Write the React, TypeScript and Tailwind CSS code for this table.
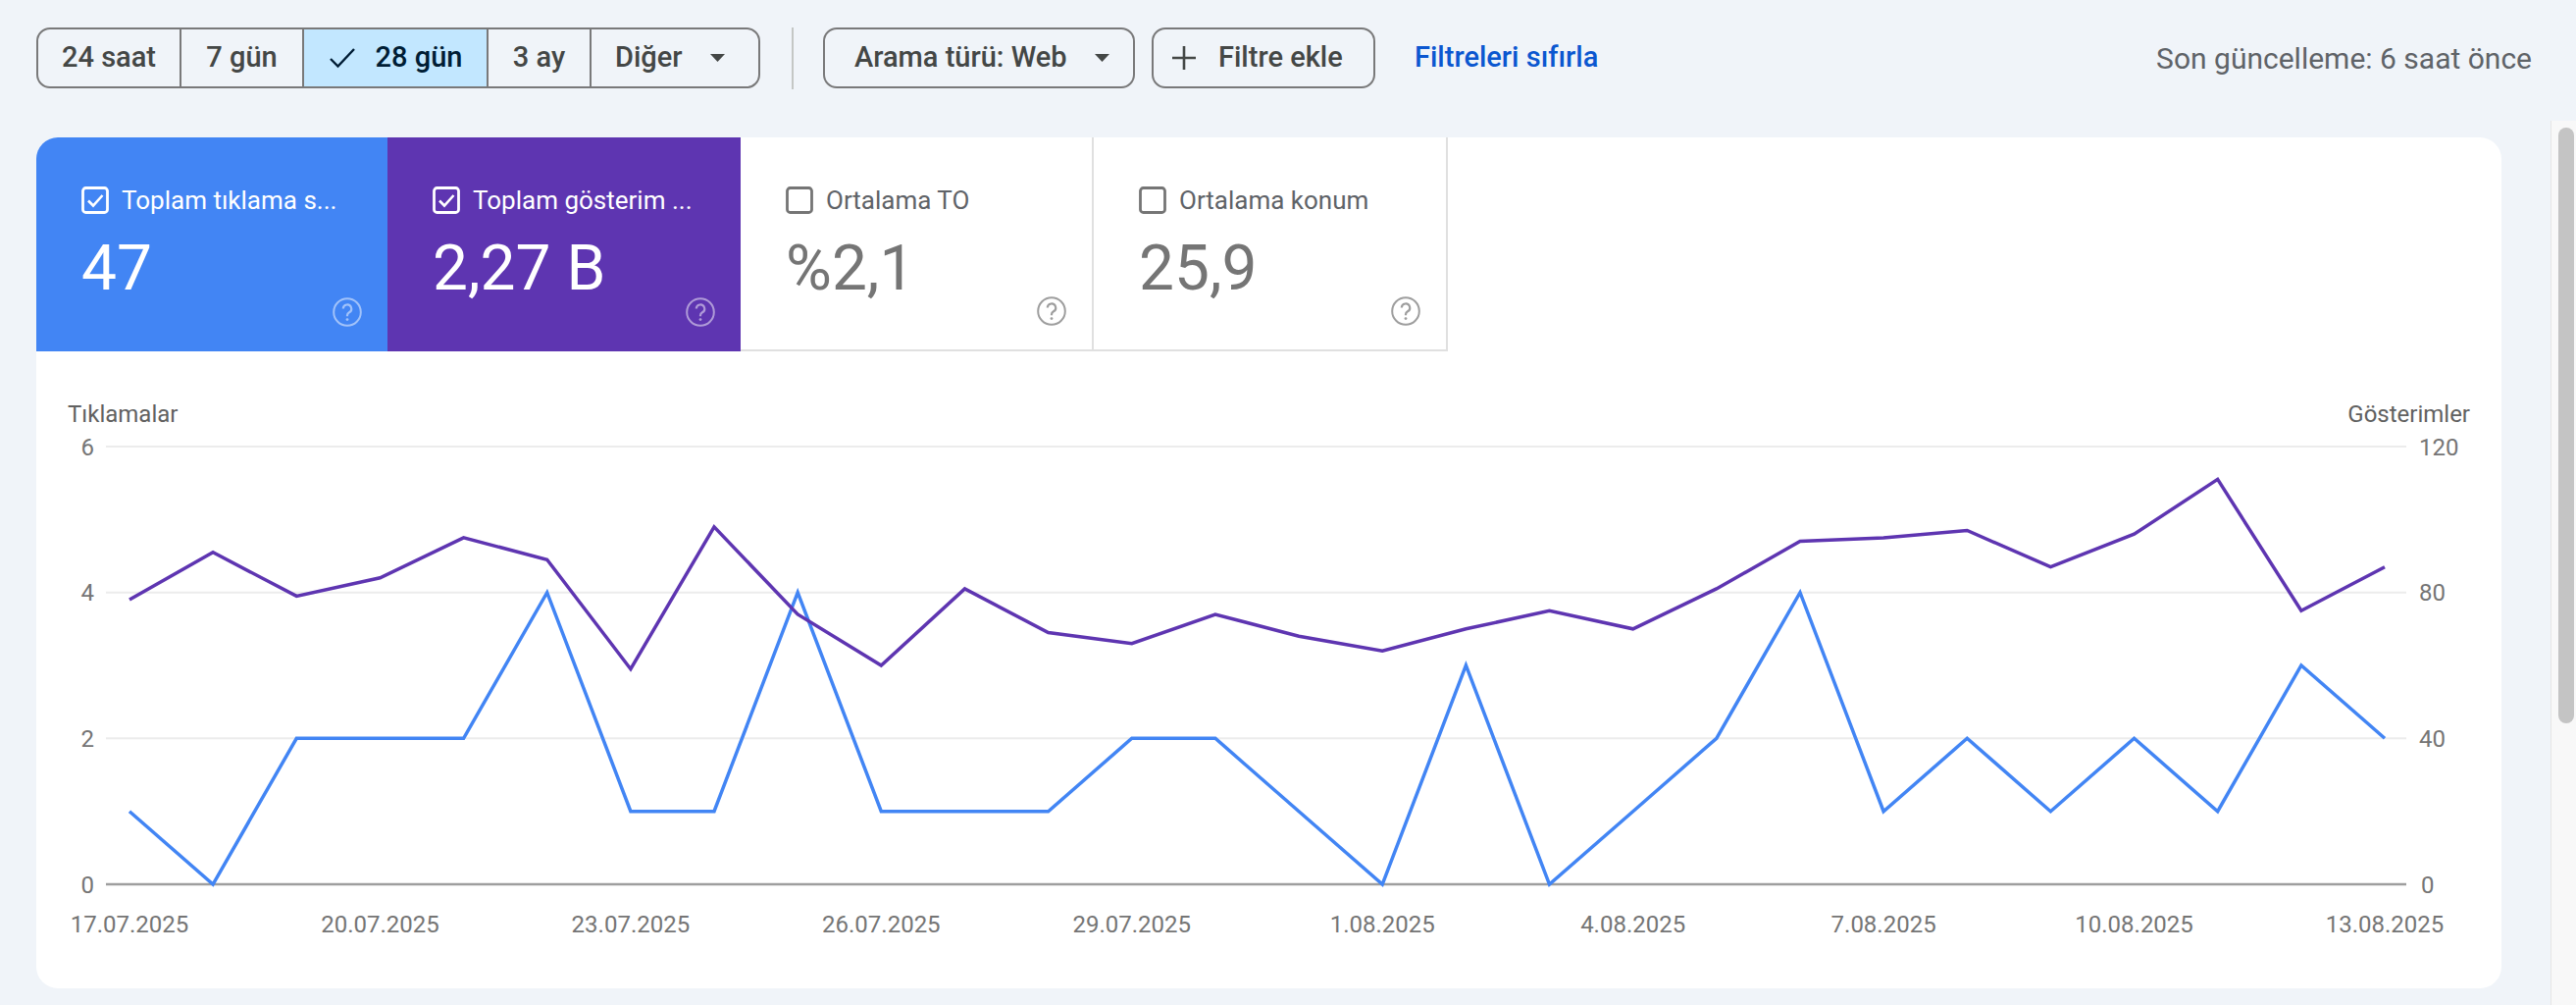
import React from "react";

const clicks = [1, 0, 2, 2, 2, 4, 1, 1, 4, 1, 1, 1, 2, 2, 1, 0, 3, 0, 1, 2, 4, 1, 2, 1, 2, 1, 3, 2];
const impressions = [
  78, 91, 79, 84, 95, 89, 59, 98, 74, 60, 81, 69, 66, 74, 68, 64, 70, 75, 70, 81, 94, 95, 97, 87, 96, 111, 75, 87,
];
const dateLabels = [
  "17.07.2025",
  "20.07.2025",
  "23.07.2025",
  "26.07.2025",
  "29.07.2025",
  "1.08.2025",
  "4.08.2025",
  "7.08.2025",
  "10.08.2025",
  "13.08.2025",
];

// chart geometry (card-relative)
const X0 = 95;
const STEP = (2394 - 95) / 27;
const Y_ZERO = 543;
const Y_TOP = 97;
const GRID_L = 71;
const GRID_R = 2416;

const xAt = (i: number) => X0 + i * STEP;
const yClicks = (v: number) => Y_ZERO - (v / 6) * (Y_ZERO - Y_TOP);
const yImpr = (v: number) => Y_ZERO - (v / 120) * (Y_ZERO - Y_TOP);

function Caret() {
  return (
    <svg width="15" height="8" viewBox="0 0 15 8" className="shrink-0">
      <polygon points="0,0 15,0 7.5,8" fill="#444746" />
    </svg>
  );
}

function CheckMark() {
  return (
    <svg width="28" height="24" viewBox="0 0 28 24" className="shrink-0">
      <polyline points="2,13 9.5,20.5 26,3" fill="none" stroke="#001d35" strokeWidth="2.4" />
    </svg>
  );
}

function PlusIcon() {
  return (
    <svg width="26" height="26" viewBox="0 0 26 26" className="shrink-0">
      <path d="M13 1v24M1 13h24" stroke="#444746" strokeWidth="2.6" fill="none" />
    </svg>
  );
}

function CheckBox({ checked, color }: { checked: boolean; color: string }) {
  return (
    <svg width="28" height="28" viewBox="0 0 28 28" className="shrink-0">
      <rect x="1.5" y="1.5" width="25" height="25" rx="3" fill="none" stroke={color} strokeWidth="2.8" />
      {checked && <polyline points="7,14.5 12,19.5 21.5,9" fill="none" stroke={color} strokeWidth="2.6" />}
    </svg>
  );
}

function HelpIcon({ color }: { color: string }) {
  return (
    <svg width="30" height="30" viewBox="0 0 30 30" className="shrink-0">
      <circle cx="15" cy="15" r="13.8" fill="none" stroke={color} strokeWidth="2" />
      <path
        d="M10.8 11.6a4.2 4.2 0 1 1 6.2 3.7c-1.2.7-2 1.5-2 2.9v1"
        fill="none"
        stroke={color}
        strokeWidth="2.2"
      />
      <circle cx="15" cy="22.6" r="1.4" fill={color} />
    </svg>
  );
}

interface Metric {
  label: string;
  value: string;
  checked: boolean;
  bg: string;
}

function MetricTile({ m, width, white }: { m: Metric; width: string; white: boolean }) {
  const fg = white ? "#757575" : "#ffffff";
  return (
    <div
      className={`flex h-[218px] ${width} flex-col pl-[46px] pt-[50px] ${m.bg} ${
        white ? "border-r-2 border-b-2 border-[#e0e0e0]" : ""
      }`}
    >
      <div className="flex h-[28px] items-center gap-[13px]">
        <CheckBox checked={m.checked} color={fg} />
        <span className={`text-[26px] leading-[28px] whitespace-nowrap ${white ? "text-[#5f6368]" : "text-white"}`}>
          {m.label}
        </span>
      </div>
      <div className={`mt-[28px] text-[64px] leading-[56px] ${white ? "text-[#757575]" : "text-white"}`}>
        {m.value}
      </div>
      <div className="mt-auto flex justify-end pr-[26px] pb-[25px]">
        <HelpIcon color={white ? "#9e9e9e" : "rgba(255,255,255,0.5)"} />
      </div>
    </div>
  );
}

function Chart() {
  const clickPts = clicks.map((v, i) => `${xAt(i).toFixed(1)},${yClicks(v).toFixed(1)}`).join(" ");
  const imprPts = impressions.map((v, i) => `${xAt(i).toFixed(1)},${yImpr(v).toFixed(1)}`).join(" ");
  const grid = [
    { y: Y_TOP, l: "6", r: "120" },
    { y: yClicks(4), l: "4", r: "80" },
    { y: yClicks(2), l: "2", r: "40" },
  ];
  return (
    <svg width="2513" height="649" viewBox="0 0 2513 649" className="block font-[Roboto,sans-serif]">
      <text x="32" y="72" fontSize="24" fill="#616161">
        Tıklamalar
      </text>
      <text x="2481" y="72" fontSize="24" fill="#616161" textAnchor="end">
        Gösterimler
      </text>
      {grid.map((g) => (
        <g key={g.l}>
          <line x1={GRID_L} x2={GRID_R} y1={g.y} y2={g.y} stroke="#ececec" strokeWidth="2" />
          <text x="59" y={g.y + 8.5} fontSize="24" fill="#757575" textAnchor="end">
            {g.l}
          </text>
          <text x="2429" y={g.y + 8.5} fontSize="24" fill="#757575">
            {g.r}
          </text>
        </g>
      ))}
      <line x1={GRID_L} x2={GRID_R} y1={Y_ZERO} y2={Y_ZERO} stroke="#9e9e9e" strokeWidth="2.5" />
      <text x="59" y={Y_ZERO + 8.5} fontSize="24" fill="#757575" textAnchor="end">
        0
      </text>
      <text x="2431" y={Y_ZERO + 8.5} fontSize="24" fill="#757575">
        0
      </text>
      {dateLabels.map((d, k) => (
        <text key={d} x={xAt(k * 3)} y="592" fontSize="24" fill="#757575" textAnchor="middle">
          {d}
        </text>
      ))}
      <polyline points={clickPts} fill="none" stroke="#4285f4" strokeWidth="3.5" strokeLinejoin="miter" />
      <polyline points={imprPts} fill="none" stroke="#5e35b1" strokeWidth="3.5" strokeLinejoin="miter" />
    </svg>
  );
}

const metrics: Metric[] = [
  { label: "Toplam tıklama s...", value: "47", checked: true, bg: "bg-[#4285f4]" },
  { label: "Toplam gösterim ...", value: "2,27 B", checked: true, bg: "bg-[#5e35b1]" },
  { label: "Ortalama TO", value: "%2,1", checked: false, bg: "bg-white" },
  { label: "Ortalama konum", value: "25,9", checked: false, bg: "bg-white" },
];

export default function App() {
  const segments = [
    { label: "24 saat", w: "w-[144px]" },
    { label: "7 gün", w: "w-[125px]" },
    { label: "28 gün", w: "w-[188px]", selected: true },
    { label: "3 ay", w: "w-[105px]" },
  ];

  return (
    <div className="flex h-[1024px] w-[2626px] flex-col overflow-hidden bg-[#f0f4f9] font-[Roboto,sans-serif]">
      {/* toolbar */}
      <div className="flex h-[123px] shrink-0 items-start pt-[28px] pr-[45px] pl-[37px]">
        <div className="flex h-[62px] overflow-hidden rounded-[14px] border-2 border-[#79797a] text-[29px] font-medium text-[#444746]">
          {segments.map((s, i) => (
            <div
              key={s.label}
              className={`flex h-full ${s.w} items-center justify-center ${i > 0 ? "border-l-2 border-[#79797a]" : ""} ${
                s.selected ? "gap-[20px] bg-[#c2e7ff] text-[#001d35]" : ""
              }`}
            >
              {s.selected && <CheckMark />}
              <span>{s.label}</span>
            </div>
          ))}
          <div className="flex h-full w-[172px] items-center border-l-2 border-[#79797a] pl-[24px]">
            <span>Diğer</span>
            <span className="ml-[28px]">
              <Caret />
            </span>
          </div>
        </div>

        <div className="ml-[32px] h-[63px] w-[2px] bg-[#c4c7c5]" />

        <button className="ml-[30px] flex h-[62px] w-[318px] items-center rounded-[14px] border-2 border-[#79797a] pr-[24px] pl-[30px] text-[29px] font-medium text-[#444746]">
          <span className="whitespace-nowrap">Arama türü: Web</span>
          <span className="ml-auto">
            <Caret />
          </span>
        </button>

        <button className="ml-[17px] flex h-[62px] w-[228px] items-center gap-[22px] rounded-[14px] border-2 border-[#79797a] pl-[18px] text-[29px] font-medium text-[#444746]">
          <PlusIcon />
          <span className="whitespace-nowrap">Filtre ekle</span>
        </button>

        <a className="ml-[40px] flex h-[62px] items-center text-[29px] font-medium whitespace-nowrap text-[#0b57d0]">
          Filtreleri sıfırla
        </a>

        <div className="ml-auto flex h-[62px] items-center text-[30px] whitespace-nowrap text-[#5f6368]">
          Son güncelleme: 6 saat önce
        </div>
      </div>

      {/* scroll area */}
      <div className="flex min-h-0 flex-1">
        <div className="flex-1 pt-[17px] pr-[50px] pl-[37px]">
          <div className="h-[867px] w-[2513px] overflow-hidden rounded-[22px] bg-white">
            <div className="flex">
              <MetricTile m={metrics[0]} width="w-[358px]" white={false} />
              <MetricTile m={metrics[1]} width="w-[360px]" white={false} />
              <MetricTile m={metrics[2]} width="w-[360px]" white />
              <MetricTile m={metrics[3]} width="w-[361px]" white />
            </div>
            <Chart />
          </div>
        </div>
        <div className="w-[26px] shrink-0 border-l border-[#e6e6e6] bg-[#f8f8f8] pt-[7px] pl-[7px]">
          <div className="h-[607px] w-[16px] rounded-full bg-[#c4c4c4]" />
        </div>
      </div>
    </div>
  );
}
